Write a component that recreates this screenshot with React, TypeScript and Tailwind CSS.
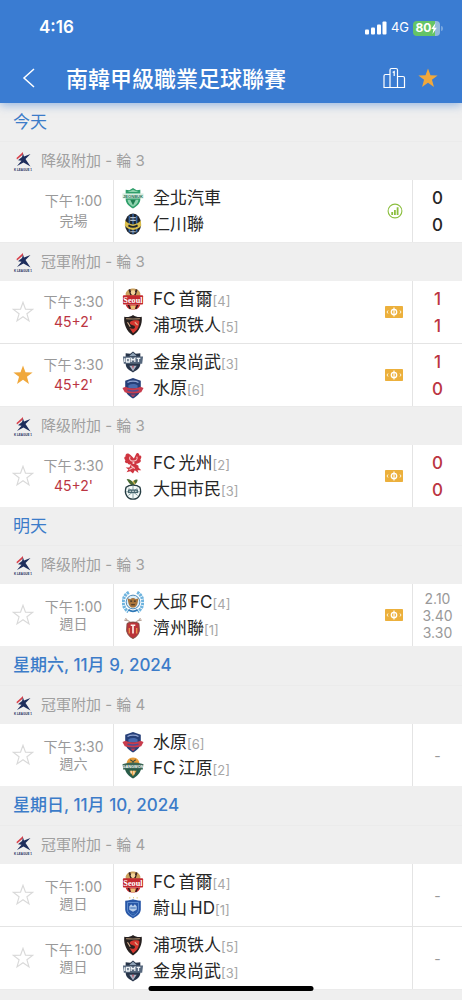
import { useState } from "react";
import type { ReactNode } from "react";

type Club = { name: string; crest: ReactNode };

type Match = {
  id: number;
  time: string;
  status: string;
  state: "finished" | "live" | "upcoming";
  home: string;
  homeRank?: number;
  away: string;
  awayRank?: number;
  badge?: "stats" | "odds";
  values: string[];
};

type Round = { title: string; matches: Match[] };
type Day = { title: string; strong?: boolean; rounds: Round[] };

const clubs: Record<string, Club> = {
  jeonbuk: {
    name: "全北汽車",
    crest: (
      <>
        <path d="M12 1 L16 3.500 L20 3 V13 C20 18 16 21 12 23.500 C8 21 4 18 4 13 V3 L8 3.500 Z" fill="#2f9e6a" />
        <path d="M12 3 L18 5.500 H6 Z M6 14 H18 C17.500 18 15 20 12 21.500 C9 20 6.500 18 6 14 Z" fill="#8fd3ae" />
        <path d="M9 14 L12 20 L15 14 Z" fill="#1e7d50" />
        <rect x="0.500" y="7" width="23" height="5.500" fill="#d5ecdf" />
        <text x="12" y="11.700" fontSize="4.500" fontWeight="700" textAnchor="middle" fill="#27735b" fontFamily="Liberation Sans">JEONBUK</text>
      </>
    ),
  },
  incheon: {
    name: "仁川聯",
    crest: (
      <>
        <ellipse cx="12" cy="12" rx="8.800" ry="11.500" fill="#20242b" />
        <path d="M8 3 V21 M12 1 V23 M16 3 V21" stroke="#3565a3" strokeWidth="1.600" />
        <path d="M3.500 8 C7 14 17 14 20.500 8 L21 14 C16 20 8 20 3 14 Z" fill="#d9bd4b" />
        <path d="M7 13.500 C10 15.500 14 15.500 17 13.500" stroke="#20242b" strokeWidth="2" fill="none" />
        <path d="M9 5 H15 M9 8 H15 M9 20.500 H15" stroke="#b9c2cc" strokeWidth="1.200" />
      </>
    ),
  },
  seoul: {
    name: "FC\u2009首爾",
    crest: (
      <>
        <path d="M4 6 C5 2 9 0.500 12 0.500 C15 0.500 19 2 20 6 V9 H4 Z" fill="#caa05c" />
        <path d="M8 1.500 L10 8 M16 1.500 L14 8" stroke="#3a2420" strokeWidth="2" />
        <circle cx="12" cy="5" r="2.500" fill="#f2d49b" />
        <rect x="1" y="8" width="22" height="10" rx="1" fill="#c42a2f" />
        <text x="12" y="16.500" fontSize="9" fontWeight="700" textAnchor="middle" fill="#fff" fontFamily="Liberation Serif">Seoul</text>
        <path d="M4 18 H20 C19 22 16 23.500 12 23.500 C8 23.500 5 22 4 18 Z" fill="#c42a2f" />
        <path d="M9 19 H15 L14 23.300 H10 Z" fill="#e8bd72" />
        <path d="M7 18.500 L9 23 M17 18.500 L15 23" stroke="#2a1a1a" strokeWidth="1.500" />
      </>
    ),
  },
  pohang: {
    name: "浦项铁人",
    crest: (
      <>
        <path d="M2.500 3 C6 4 9 3 12 1 C15 3 18 4 21.500 3 C22.500 11 19 19 12 23.500 C5 19 1.500 11 2.500 3 Z" fill="#26201f" />
        <path d="M4.500 5 C9 5.500 15 5.500 19.500 5" stroke="#9c8065" strokeWidth="1.200" fill="none" />
        <path d="M18 7 C12 6 7 8 9 11 C11 13 15 12 14 15 C13 17 10 16 8 15 L12 21 C17 18 19 13 19 8 Z" fill="#d5362f" />
        <path d="M6 9 L9 14 M14 9 L17 12" stroke="#d8b091" strokeWidth="1.200" />
      </>
    ),
  },
  gimcheon: {
    name: "金泉尚武",
    crest: (
      <>
        <path d="M12 0.500 L15 3 L20 2.500 V14 C20 19 16 21 12 23.500 C8 21 4 19 4 14 V2.500 L9 3 Z" fill="#273449" />
        <path d="M12 1.500 L16 5.500 H8 Z" fill="#8fa2b6" />
        <path d="M1 6 H23 L22 14 H2 Z" fill="#56677d" />
        <path d="M3 8 V12 M5 8 H8 V12 H5 Z M10 12 V8 L12 10 L14 8 V12 M16 8 H20 M18 8 V12" stroke="#eef2f5" strokeWidth="1.400" fill="none" />
        <path d="M8 16 L12 22 L16 16 Z" fill="#aab4c5" />
        <path d="M11 16 H13 L12 20 Z" fill="#b34858" />
      </>
    ),
  },
  suwon: {
    name: "水原",
    crest: (
      <>
        <path d="M12 1 L20.500 4 V13 C20 18 16 21 12 23.500 C8 21 4 18 3.500 13 V4 Z" fill="#263f78" />
        <path d="M6 6 C9 4 15 4 18 6" stroke="#92a6d4" strokeWidth="1.500" fill="none" />
        <path d="M7 9 C10 7 14 7 17 9 V12 H7 Z" fill="#496bae" />
        <path d="M0.500 12 L4 10.500 C9 13 15 13 20 10.500 L23.500 12 L21 16.500 C15 18.500 9 18.500 3 16.500 Z" fill="#c83c4d" />
        <path d="M6 14.500 C10 15.500 14 15.500 18 14.500" stroke="#4b4f94" strokeWidth="1.500" fill="none" />
        <path d="M9 19 H15 L12 22 Z" fill="#b0405c" />
      </>
    ),
  },
  gwangju: {
    name: "FC\u2009光州",
    crest: (
      <>
        <path d="M9 3 C6 0 3 2 4 5 C2 5 2 8 4 9 C2 10 4 13 6 12 C7 14 9 14 10 13 L8 17 L4 17 L7 19 L5 22 L9 21 L12 23.500 L14 20 L18 23 L17 20 L21 20 L18 17 L18 15 L15 13 C18 13 22 11 20 8 C22 6 21 3 19 4 C19 1 16 0 15 3 L13 7 L11 5 Z" fill="#cf3540" />
        <path d="M9 5 C7 7 9 10 12 10 C15 10 18 8 16 5 M10 15 L14 18 M8 19 L12 17" stroke="#f6c4c5" strokeWidth="1.200" fill="none" />
        <circle cx="12.500" cy="12" r="1.200" fill="#f9dada" />
      </>
    ),
  },
  daejeon: {
    name: "大田市民",
    crest: (
      <>
        <path d="M11 8 C7 6 6 2 5 1 C9 1 11 3 12 5 C13 2 15 1 17 2 C17 5 14 8 11 8 Z" fill="#496b32" />
        <path d="M12 3 L14 7" stroke="#cfb34c" strokeWidth="1.500" />
        <path d="M4.500 10 C8 7 16 7 19.500 10 C22 17 18 23 12 23 C6 23 2 17 4.500 10 Z" fill="#f5faf8" stroke="#263d43" strokeWidth="1.500" />
        <path d="M12 8.500 V22 M4.500 15 H19.500 M7 11 L17 19 M17 11 L7 19" stroke="#7f9ba0" strokeWidth="1" />
        <rect x="6.500" y="12.500" width="11" height="4" fill="#47656d" />
        <path d="M8 14.500 H16" stroke="#e8f1ef" strokeDasharray="2 1" />
      </>
    ),
  },
  daegu: {
    name: "大邱\u2009FC",
    crest: (
      <>
        <path d="M7.500 1.500 C-1 6 -0.500 18 7 22.500 M16.500 1.500 C25 6 24.500 18 17 22.500" fill="none" stroke="#6fb4df" strokeWidth="3.600" strokeDasharray="2.600 0.800" />
        <circle cx="12" cy="12" r="7.500" fill="#dceef8" stroke="#3e7eaf" strokeWidth="1" />
        <path d="M6 8 L9 9 C11 7 13 7 15 9 L18 8 L17 13 C16 17 14 18 12 18 C10 18 8 17 7 13 Z" fill="#a8743c" />
        <path d="M9 11 H11 M13 11 H15 M10 15 H14" stroke="#3a3029" strokeWidth="1.300" />
        <path d="M7 20.500 C10 22.500 14 22.500 17 20.500" stroke="#2d78b7" strokeWidth="2" fill="none" />
      </>
    ),
  },
  jeju: {
    name: "濟州聯",
    crest: (
      <>
        <path d="M4 1 C4 4 8 4 9 6 M20 1 C20 4 16 4 15 6 M2.500 3.500 L6 4 M21.500 3.500 L18 4" stroke="#baa59a" strokeWidth="1.300" fill="none" />
        <path d="M5.500 7 C9 5 15 5 18.500 7 L19 15 C18 20 15 22 12 23.500 C9 22 6 20 5 15 Z" fill="#bb3439" stroke="#794d42" strokeWidth="1" />
        <path d="M9.500 9 H14.500 M12 9 V18" stroke="#fff0e9" strokeWidth="1.800" />
        <path d="M8 12 V18 M16 12 V18" stroke="#e8924a" strokeWidth="1.500" />
      </>
    ),
  },
  gangwon: {
    name: "FC\u2009江原",
    crest: (
      <>
        <path d="M12 0.500 C17 0.500 19 4 19 8 H5 C5 4 7 0.500 12 0.500 Z" fill="#e79b38" />
        <path d="M9 3 L12 5 L15 3 M12 5 V8" stroke="#3b4e3e" strokeWidth="1.200" fill="none" />
        <path d="M3 12 H21 C20 18 16 21 12 23.500 C8 21 4 18 3 12 Z" fill="#285c49" />
        <path d="M0.500 8 C8 5.500 16 5.500 23.500 8 L22.500 14 C16 12.500 8 12.500 1.500 14 Z" fill="#3b6554" />
        <text x="12" y="11.800" fontSize="4.200" fontWeight="700" textAnchor="middle" fill="#fff" fontFamily="Liberation Sans">GANGWON</text>
        <path d="M8 15 H16 L12 21 Z" fill="#e8a044" />
        <path d="M10 15 V18 M13 15 V19" stroke="#f7efd9" strokeWidth="1.200" />
      </>
    ),
  },
  ulsan: {
    name: "蔚山\u2009HD",
    crest: (
      <>
        <path d="M8 1 H9 M12 0.800 H13 M16 1 H17" stroke="#d8b85d" strokeWidth="1.200" />
        <path d="M3.500 4 C8 4 10 3 12 2.500 C14 3 16 4 20.500 4 V14 C20 19 16 21 12 23.500 C8 21 4 19 3.500 14 Z" fill="#2857a7" />
        <path d="M6 6 H18 V14 C18 17 15 19 12 21 C9 19 6 17 6 14 Z" fill="none" stroke="#6390d0" strokeWidth="1" />
        <path d="M8 10 L10 8 L12 10 L14 8 L16 10 V14 L12 16 L8 14 Z" fill="#b7cdea" />
        <path d="M9 12 H15 M10 18 H14" stroke="#356cb4" strokeWidth="1.200" />
      </>
    ),
  },
};

const days: Day[] = [
  {
    title: "今天",
    rounds: [
      {
        title: "降级附加 - 輪 3",
        matches: [
          { id: 1, time: "1:00", status: "完場", state: "finished", home: "jeonbuk", away: "incheon", badge: "stats", values: ["0", "0"] },
        ],
      },
      {
        title: "冠軍附加 - 輪 3",
        matches: [
          { id: 2, time: "3:30", status: "45+2'", state: "live", home: "seoul", homeRank: 4, away: "pohang", awayRank: 5, badge: "odds", values: ["1", "1"] },
          { id: 3, time: "3:30", status: "45+2'", state: "live", home: "gimcheon", homeRank: 3, away: "suwon", awayRank: 6, badge: "odds", values: ["1", "0"] },
        ],
      },
      {
        title: "降级附加 - 輪 3",
        matches: [
          { id: 4, time: "3:30", status: "45+2'", state: "live", home: "gwangju", homeRank: 2, away: "daejeon", awayRank: 3, badge: "odds", values: ["0", "0"] },
        ],
      },
    ],
  },
  {
    title: "明天",
    rounds: [
      {
        title: "降级附加 - 輪 3",
        matches: [
          { id: 5, time: "1:00", status: "週日", state: "upcoming", home: "daegu", homeRank: 4, away: "jeju", awayRank: 1, badge: "odds", values: ["2.10", "3.40", "3.30"] },
        ],
      },
    ],
  },
  {
    title: "星期六, 11月 9, 2024",
    strong: true,
    rounds: [
      {
        title: "冠軍附加 - 輪 4",
        matches: [
          { id: 6, time: "3:30", status: "週六", state: "upcoming", home: "suwon", homeRank: 6, away: "gangwon", awayRank: 2, values: ["-"] },
        ],
      },
    ],
  },
  {
    title: "星期日, 11月 10, 2024",
    strong: true,
    rounds: [
      {
        title: "冠軍附加 - 輪 4",
        matches: [
          { id: 7, time: "1:00", status: "週日", state: "upcoming", home: "seoul", homeRank: 4, away: "ulsan", awayRank: 1, values: ["-"] },
          { id: 8, time: "1:00", status: "週日", state: "upcoming", home: "pohang", homeRank: 5, away: "gimcheon", awayRank: 3, values: ["-"] },
        ],
      },
      { title: "", matches: [] },
    ],
  },
];

const Star: React.FC<{ filled: boolean; className: string }> = ({ filled, className }) => (
  <svg
    viewBox="0 0 24 24"
    className={className}
    fill={filled ? "#f0a83c" : "none"}
    stroke={filled ? "none" : "#d9d9d9"}
    strokeWidth="1.3"
    aria-hidden="true"
  >
    <path d="M12 1.500 L14.700 9 L22.500 9.200 L16.300 14 L18.500 21.700 L12 17.200 L5.500 21.700 L7.700 14 L1.500 9.200 L9.300 9 Z" />
  </svg>
);

const LeagueLogo = () => (
  <svg viewBox="0 0 20 20" className="size-5 shrink-0" aria-hidden="true">
    <path d="M10 1 L3.500 7 L4 8.500 L10 3.500 Z" fill="#d8414b" />
    <path d="M10 2.500 L11 5.500 L17.500 3 L12.500 8 L17.500 15.500 L10.500 11.500 L4 15 L8.500 9.800 L5 9.300 L9 6 Z" fill="#1d2d5c" />
    <text x="10" y="19.500" fontSize="3" fontWeight="700" textAnchor="middle" fill="#1d2d5c" fontFamily="Liberation Sans">K LEAGUE 1</text>
  </svg>
);

const StatsBadge = () => (
  <svg viewBox="0 0 16 16" className="size-4" aria-hidden="true">
    <circle cx="8" cy="8" r="6.900" fill="none" stroke="#8cbf3f" strokeWidth="1.100" />
    <path d="M4.300 9 H6.100 V12 H4.300 Z M7 7 H8.800 V12 H7 Z M9.700 4.200 H11.500 V12 H9.700 Z" fill="#8cbf3f" />
  </svg>
);

const OddsBadge = () => (
  <svg viewBox="0 0 18 12" className="h-3 w-[18px]" aria-hidden="true">
    <rect width="18" height="12" rx="0.800" fill="#ecb03c" />
    <circle cx="9" cy="6" r="2.700" fill="none" stroke="#fff" strokeWidth="1.300" />
    <path d="M9 1.500 V10.500" stroke="#fff" strokeWidth="1.200" />
    <path d="M3 4.500 L2 6 L3 7.500 M15 4.500 L16 6 L15 7.500" stroke="#fff6dc" strokeWidth="1" fill="none" />
  </svg>
);

const Team: React.FC<{ club: Club; rank?: number }> = ({ club, rank }) => (
  <div className="flex h-[26px] items-center">
    <svg viewBox="0 0 24 24" className="mr-[9px] size-[22px] shrink-0" aria-hidden="true">
      {club.crest}
    </svg>
    <span className="pt-0.5 text-[17px] text-[#262626]">{club.name}</span>
    {rank && <span className="pt-1.5 text-[13px] text-[#a6a6a6]">[{rank}]</span>}
  </div>
);

const MatchRow: React.FC<{ match: Match }> = ({ match }) => {
  const [favourite, setFavourite] = useState(match.id === 3);
  const live = match.state === "live";
  const upcoming = match.state === "upcoming";

  return (
    <li className="box-content flex h-[62px] border-b border-[#e4e4e4] bg-white last:border-b-0">
      <div className="flex w-[114px] shrink-0 items-center border-r border-[#e4e4e4]">
        <div className="flex w-[34px] justify-end">
          {match.state !== "finished" && (
            <button type="button" aria-label="收藏" aria-pressed={favourite} onClick={() => setFavourite(!favourite)}>
              <Star filled={favourite} className="size-[22px]" />
            </button>
          )}
        </div>
        <div
          className={`flex flex-1 flex-col items-center text-[14px] whitespace-nowrap text-[#999] ${
            upcoming ? "leading-[17px]" : "leading-5"
          }`}
        >
          <span>
            下午<span className="ml-0.5">{match.time}</span>
          </span>
          <span className={live ? "text-[#bb3542]" : ""}>{match.status}</span>
        </div>
      </div>
      <div className="flex min-w-0 flex-1 items-center justify-between pr-[9px] pl-2">
        <div>
          <Team club={clubs[match.home]} rank={match.homeRank} />
          <Team club={clubs[match.away]} rank={match.awayRank} />
        </div>
        {match.badge === "stats" && <StatsBadge />}
        {match.badge === "odds" && <OddsBadge />}
      </div>
      <div
        className={`flex w-[50px] shrink-0 flex-col items-center justify-center border-l border-[#e4e4e4] ${
          upcoming
            ? "text-[14px] leading-[17px] text-[#999]"
            : live
              ? "pt-0.5 text-[17px] leading-[27px] font-medium text-[#bb3542]"
              : "pt-0.5 text-[17px] leading-[27px] font-medium text-[#262626]"
        }`}
      >
        {match.values.map((value, i) => (
          <span key={i}>{value}</span>
        ))}
      </div>
    </li>
  );
};

const StatusBar = () => (
  <div className="flex h-[54px] items-center justify-between pt-0.5 pr-[19px] pl-[39px]">
    <span className="text-[17px] font-semibold">4:16</span>
    <div className="flex items-center">
      <svg viewBox="0 0 22 14" className="h-3.5 w-[22px]" fill="#fff" aria-hidden="true">
        <rect x="0" y="8.500" width="4" height="5" rx="1" />
        <rect x="6" y="6.500" width="4" height="7" rx="1" />
        <rect x="12" y="3.500" width="4" height="10" rx="1" />
        <rect x="17.500" y="0.500" width="4" height="13" rx="1" />
      </svg>
      <span className="ml-1 text-[13px]">4G</span>
      <span className="ml-1 flex h-[15px] w-[27px] items-center justify-center rounded bg-linear-to-r from-[#65c466] from-80% to-[#93b9dc] to-80% text-[12px] font-bold">
        80
        <svg viewBox="0 0 6 11" className="h-[11px] w-1.5" fill="#fff" aria-hidden="true">
          <path d="M4.500 0 L0.300 6 H2.500 L1.500 11 L5.800 4.700 H3.500 Z" />
        </svg>
      </span>
      <span className="ml-px h-[5px] w-0.5 rounded-r bg-[#78a7e0]" />
    </div>
  </div>
);

const Header = () => {
  const [favourite, setFavourite] = useState(true);
  return (
    <header className="z-10 shrink-0 bg-[#3a7cd2] text-white shadow-[0_2px_9px_rgba(58,124,210,0.5)]">
      <StatusBar />
      <div className="flex h-[49px] items-center pr-[23px] pb-px pl-[22px]">
        <button type="button" aria-label="返回">
          <svg viewBox="0 0 14 22" className="h-[22px] w-3.5" fill="none" stroke="#fff" strokeWidth="1.5" aria-hidden="true">
            <path d="M12 2 L2 11 L12 20" />
          </svg>
        </button>
        <h1 className="ml-[30px] flex-1 pt-0.5 text-[22px] font-medium whitespace-nowrap">南韓甲級職業足球聯賽</h1>
        <button type="button" aria-label="排名">
          <svg viewBox="0 0 24 22" className="h-[22px] w-6" fill="none" stroke="#fff" strokeWidth="1.2" aria-hidden="true">
            <path d="M8 20.500 V3 Q8 1.500 9.500 1.500 H14 Q15.500 1.500 15.500 3 V20.500 M8 7.500 H3.500 Q2 7.500 2 9 V20.500 H22.500 V11 Q22.500 9.500 21 9.500 H15.500" />
            <path d="M10.700 5.500 L12.200 4.500 V9" />
          </svg>
        </button>
        <button type="button" aria-label="收藏聯賽" aria-pressed={favourite} onClick={() => setFavourite(!favourite)}>
          <Star filled={favourite} className="ml-[11px] size-[22px]" />
        </button>
      </div>
    </header>
  );
};

const App = () => {
  return (
    <div
      lang="zh-Hant"
      className="relative flex h-screen flex-col overflow-hidden bg-[#efefef] font-['Inter','Noto_Sans_CJK_TC','Noto_Sans_CJK_SC',sans-serif]"
    >
      <Header />
      <main className="min-h-0 flex-1 overflow-hidden">
        {days.map((day) => (
          <section key={day.title}>
            <h2
              className={`flex items-center px-[13px] text-[17px] text-[#3c7cc9] ${
                day.strong ? "h-[39px] font-medium" : "h-[38px] pt-0.5"
              }`}
            >
              {day.title}
            </h2>
            {day.rounds.map((round, i) => (
              <section key={i}>
                <h3 className="flex h-[39px] items-center gap-2 border-t border-[#ebebeb] pl-[13px] text-[15px] text-[#a0a0a0]">
                  <LeagueLogo />
                  {round.title}
                </h3>
                <ul>
                  {round.matches.map((match) => (
                    <MatchRow key={match.id} match={match} />
                  ))}
                </ul>
              </section>
            ))}
          </section>
        ))}
      </main>
      <div className="absolute bottom-[9px] left-1/2 h-[5px] w-[165px] -translate-x-1/2 rounded-full bg-black" />
    </div>
  );
};

export default App;
